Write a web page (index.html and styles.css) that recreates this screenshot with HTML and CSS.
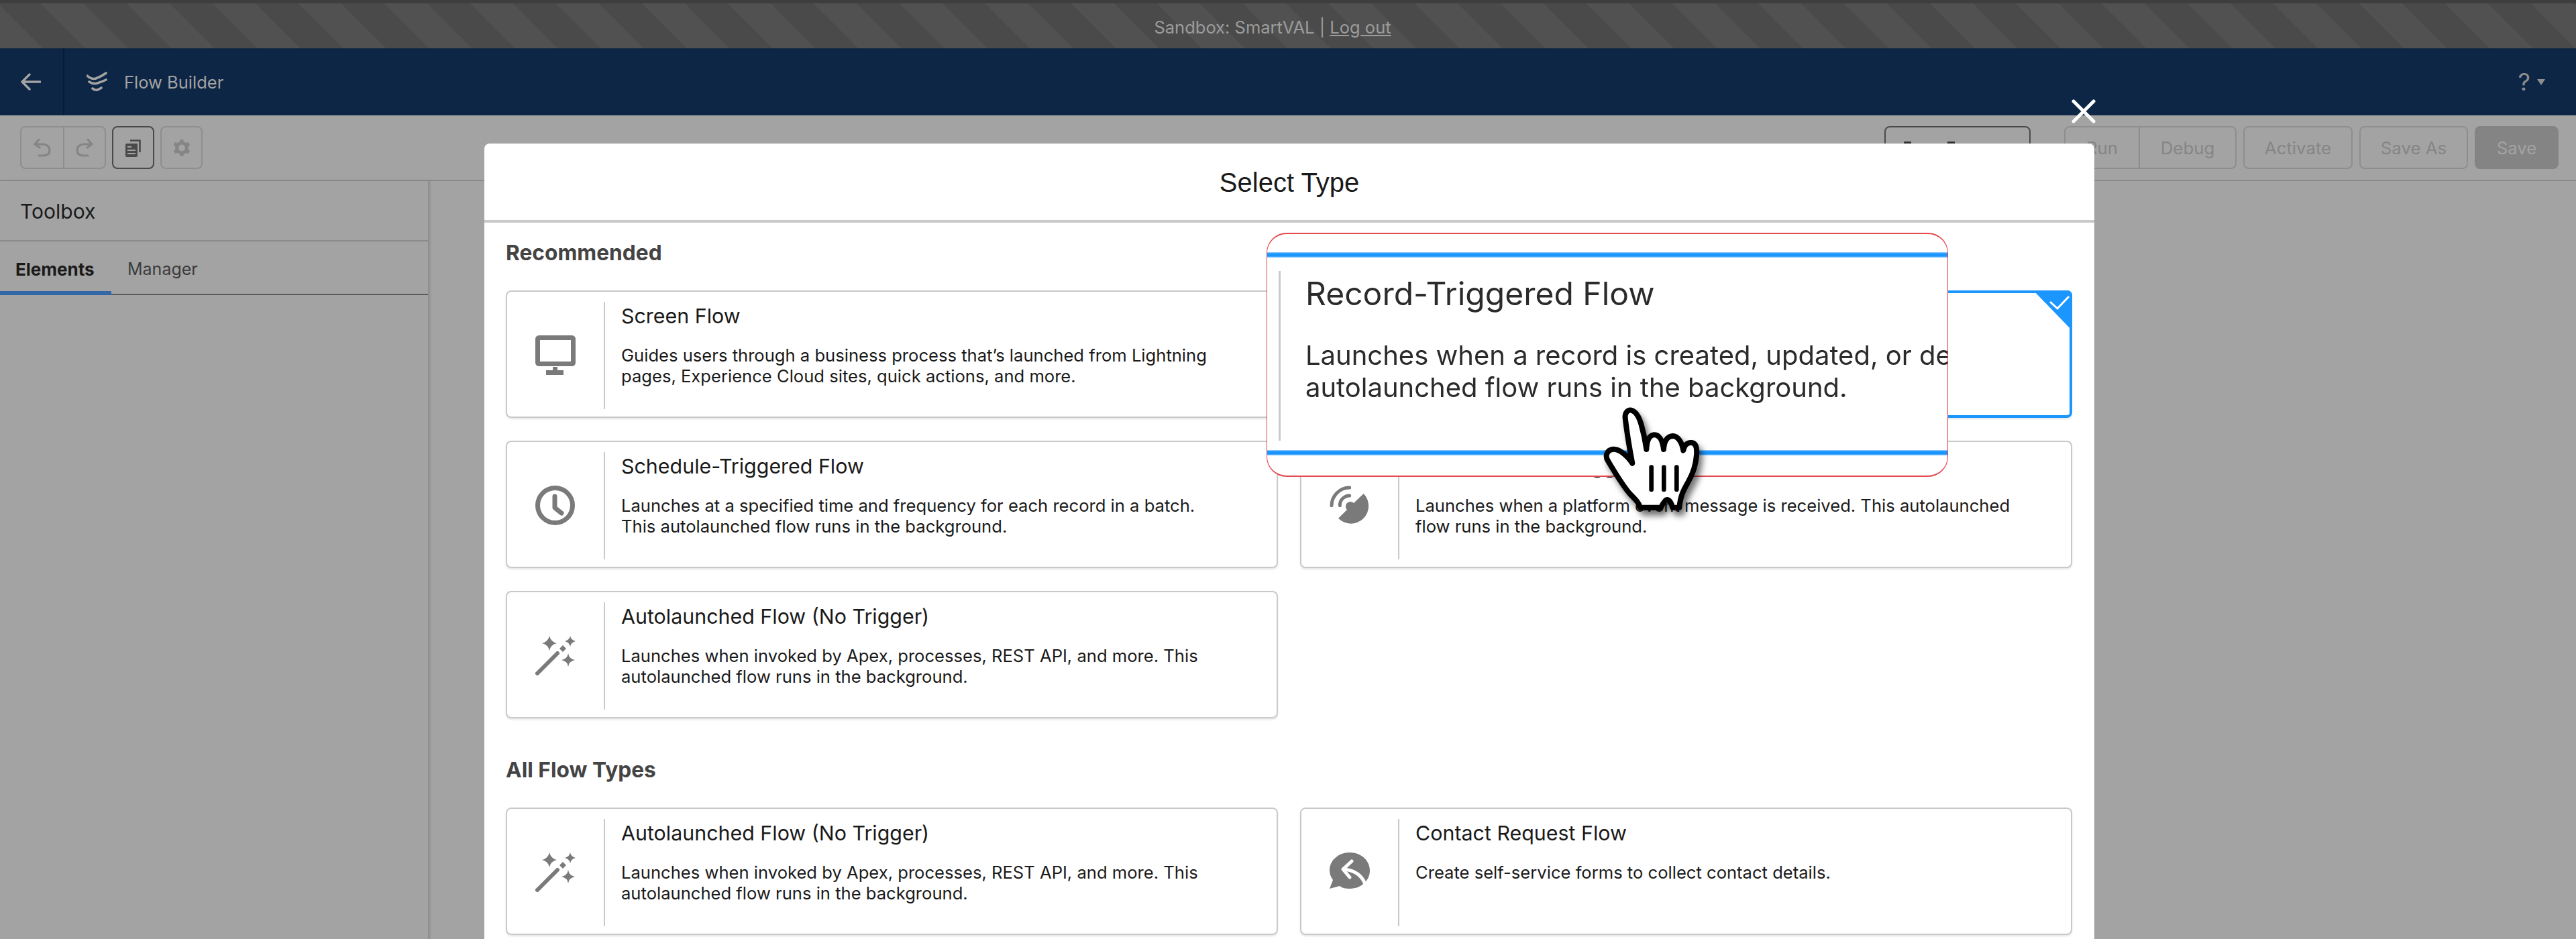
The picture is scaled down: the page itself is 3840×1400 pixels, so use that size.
FILE: index.html
```html
<!DOCTYPE html>
<html lang="en">
<head>
<meta charset="utf-8">
<title>Flow Builder</title>
<link rel="stylesheet" href="styles.css">
</head>
<body>
<svg class="defs" width="0" height="0" aria-hidden="true">
  <symbol id="wand" viewBox="0 0 60 60">
    <path d="M21 0Q23 9 32 11Q23 13 21 22Q19 13 10 11Q19 9 21 0ZM52 0Q53 6 60 8Q53 10 52 16Q51 10 44 8Q51 6 52 0ZM49 26Q50 34 59 36Q50 38 49 46Q48 38 39 36Q48 34 49 26ZM41 14L46 19L41 24L36 19Z" fill="#7a7a7a"/>
    <path d="M3 56L33 26" stroke="#7a7a7a" stroke-width="6" stroke-linecap="round" fill="none"/>
  </symbol>
</svg>

<header class="sandbox">
  <span>Sandbox: SmartVAL | <a class="logout" href="#">Log out</a></span>
</header>

<nav class="nav">
  <div class="nav-back">
    <svg width="30" height="26" viewBox="0 0 30 26"><path d="M29 13H3M13 2L2 13L13 24" fill="none" stroke="#a3a3a3" stroke-width="3.4" stroke-linecap="round" stroke-linejoin="round"/></svg>
  </div>
  <div class="nav-app">
    <svg width="32" height="32" viewBox="0 0 32 32"><path d="M1 7Q8 13 14 11Q22 8 29 3M4 16Q10 20 16 18Q23 16 29 13M9 26Q13 29 16 28Q19 27 22 25" fill="none" stroke="#a3a3a3" stroke-width="3.6" stroke-linecap="round"/></svg>
    <span>Flow Builder</span>
  </div>
  <div class="nav-help"><span class="help-mark">?</span><span class="help-caret"></span></div>
</nav>

<div class="toolbar">
  <div class="tool-left">
    <div class="btn-group">
      <span class="icon-btn">
        <svg width="26" height="27" viewBox="0 0 26 27"><path d="M8 1L2 8L9 13M3 8H14Q24 9 24 17Q24 25 14 25H8" fill="none" stroke="#858585" stroke-width="3.2" stroke-linecap="round" stroke-linejoin="round"/></svg>
      </span>
      <span class="icon-btn">
        <svg width="26" height="27" viewBox="0 0 26 27"><path d="M18 1L24 8L17 13M23 8H12Q2 9 2 17Q2 25 12 25H18" fill="none" stroke="#858585" stroke-width="3.2" stroke-linecap="round" stroke-linejoin="round"/></svg>
      </span>
    </div>
    <span class="icon-btn solo active">
      <svg width="24" height="27" viewBox="0 0 24 27"><path d="M7 2.5H21.5V20" fill="none" stroke="#4a4a4a" stroke-width="2.6"/><path d="M2 7H18V25a2 2 0 0 1-2 2H2a2 2 0 0 1-2-2V9a2 2 0 0 1 2-2Z" fill="#4a4a4a"/><path d="M3 12H9M3 17H15M3 22H15" stroke="#a3a3a3" stroke-width="2"/></svg>
    </span>
    <span class="icon-btn solo">
      <svg width="26" height="27" viewBox="0 0 26 27"><circle cx="13" cy="13.5" r="7.5" fill="none" stroke="#858585" stroke-width="5"/><path d="M13 1V6M13 21V26M2 7L6.500 9.500M19.500 17.500L24 20M2 20L6.500 17.500M19.500 9.500L24 7" stroke="#858585" stroke-width="5"/></svg>
    </span>
  </div>
  <div class="tool-right">
    <span class="text-btn hidden-btn"><i></i><i></i></span>
    <div class="btn-group run-group">
      <span class="text-btn run">Run</span>
      <span class="text-btn debug">Debug</span>
    </div>
    <span class="text-btn activate">Activate</span>
    <span class="text-btn save-as">Save As</span>
    <span class="text-btn save">Save</span>
  </div>
</div>

<div class="workspace">
  <aside class="panel">
    <div class="panel-title">Toolbox</div>
    <div class="tabs">
      <span class="tab tab-on">Elements</span>
      <span class="tab">Manager</span>
    </div>
  </aside>
</div>

<section class="modal">
  <svg class="close" width="36" height="36" viewBox="0 0 36 36"><path d="M3 3L33 33M33 3L3 33" stroke="#fff" stroke-width="5" stroke-linecap="round"/></svg>
  <h1 class="modal-title">Select Type</h1>
  <div class="modal-body">
    <h2 class="group-title">Recommended</h2>
    <div class="card-grid">
      <article class="card">
        <div class="card-icon">
          <svg width="60" height="60" viewBox="0 0 60 60"><rect x="3.500" y="3.500" width="53" height="39" rx="2" fill="none" stroke="#7a7a7a" stroke-width="7"/><path d="M26 47H33V52H42V59H16V52H26Z" fill="#7a7a7a"/></svg>
        </div>
        <div class="card-text">
          <div class="card-title">Screen Flow</div>
          <p class="card-desc">Guides users through a business process that’s launched from Lightning<br>pages, Experience Cloud sites, quick actions, and more.</p>
        </div>
      </article>
      <article class="card card-selected">
        <div class="card-icon"></div>
        <div class="card-text">
          <div class="card-title">Record-Triggered Flow</div>
          <p class="card-desc">Launches when a record is created, updated, or deleted. This<br>autolaunched flow runs in the background.</p>
        </div>
        <svg class="corner" width="60" height="60" viewBox="0 0 60 60"><path d="M2 0H52Q60 0 60 8V60Z" fill="#1b96ff"/><path d="M27 17L38 27L55 9" fill="none" stroke="#fff" stroke-width="3"/></svg>
      </article>
      <article class="card">
        <div class="card-icon">
          <svg width="60" height="60" viewBox="0 0 60 60"><circle cx="29.500" cy="29.500" r="26" fill="none" stroke="#7a7a7a" stroke-width="7"/><path d="M29 16V33L39 41" fill="none" stroke="#7a7a7a" stroke-width="7" stroke-linecap="round" stroke-linejoin="round"/></svg>
        </div>
        <div class="card-text">
          <div class="card-title">Schedule-Triggered Flow</div>
          <p class="card-desc">Launches at a specified time and frequency for each record in a batch.<br>This autolaunched flow runs in the background.</p>
        </div>
      </article>
      <article class="card">
        <div class="card-icon">
          <svg width="60" height="60" viewBox="0 0 60 60"><path d="M50.700 12A26 26 0 0 1 13 48.700L26 36A6.500 6.500 0 1 1 36 26Z" fill="#7a7a7a"/><path d="M3 29.700A27 27 0 0 1 29.700 3M15.300 29.700A14.500 14.500 0 0 1 29.700 15" fill="none" stroke="#7a7a7a" stroke-width="5" stroke-linecap="round"/></svg>
        </div>
        <div class="card-text">
          <div class="card-title">Platform Event–Triggered Flow</div>
          <p class="card-desc">Launches when a platform event message is received. This autolaunched<br>flow runs in the background.</p>
        </div>
      </article>
      <article class="card">
        <div class="card-icon"><svg width="60" height="60"><use href="#wand"/></svg></div>
        <div class="card-text">
          <div class="card-title">Autolaunched Flow (No Trigger)</div>
          <p class="card-desc">Launches when invoked by Apex, processes, REST API, and more. This<br>autolaunched flow runs in the background.</p>
        </div>
      </article>
    </div>

    <h2 class="group-title group-second">All Flow Types</h2>
    <div class="card-grid">
      <article class="card">
        <div class="card-icon"><svg width="60" height="60"><use href="#wand"/></svg></div>
        <div class="card-text">
          <div class="card-title">Autolaunched Flow (No Trigger)</div>
          <p class="card-desc">Launches when invoked by Apex, processes, REST API, and more. This<br>autolaunched flow runs in the background.</p>
        </div>
      </article>
      <article class="card">
        <div class="card-icon">
          <svg width="60" height="60" viewBox="0 0 60 60"><path d="M30 0C47 0 60 12 60 27C60 42 47 54 30 54C24 54 19 53 15 50L0 54L5 41C2 37 0 32 0 27C0 12 13 0 30 0Z" fill="#7a7a7a"/><path d="M33 13L20 25L30 37M21 25Q45 27 53 47" fill="none" stroke="#fff" stroke-width="5" stroke-linecap="round" stroke-linejoin="round"/></svg>
        </div>
        <div class="card-text">
          <div class="card-title">Contact Request Flow</div>
          <p class="card-desc">Create self-service forms to collect contact details.</p>
        </div>
      </article>
    </div>
  </div>
</section>

<div class="magnifier">
  <div class="mag-bar"></div>
  <div class="mag-body">
    <div class="mag-title">Record-Triggered Flow</div>
    <p class="mag-desc">Launches when a record is created, updated, or deleted. This<br>autolaunched flow runs in the background.</p>
  </div>
  <div class="mag-bar"></div>
</div>

<svg class="hand" width="220" height="200" viewBox="0 0 660 600">
  <path d="M250 302C238 240 225 160 218 100C216 75 230 62 245 65C265 70 280 95 290 130C300 165 308 205 313 240C315 200 325 178 345 175C370 173 385 200 390 240C392 205 405 182 430 180C455 180 472 210 478 245C482 222 495 208 515 210C532 212 540 230 537 265C534 310 520 350 500 385C480 420 465 445 460 500H430C425 480 415 465 405 465C395 465 385 485 378 500H285C280 480 265 465 240 440C205 400 170 340 140 290C128 270 135 245 160 240C190 236 225 265 250 302Z" fill="#fff" stroke="#000" stroke-width="24" stroke-linejoin="round"/>
  <path d="M335 320V420M391 320V420M448 320V420" stroke="#000" stroke-width="20" stroke-linecap="round" fill="none"/>
</svg>
</body>
</html>
```

FILE: styles.css
```css
* { box-sizing: border-box; }
html, body { margin: 0; height: 1400px; overflow: hidden; }
body {
  position: relative;
  display: flex;
  flex-direction: column;
  background: #a3a3a3;
  font-family: Inter, "Liberation Sans", sans-serif;
  color: #1a1a1a;
}
.defs { position: absolute; }

/* sandbox strip */
.sandbox {
  height: 72px;
  flex: none;
  display: flex;
  align-items: center;
  justify-content: center;
  padding: 4px 46px 0 0;
  border-top: 5px solid #3e3e3e;
  background: repeating-linear-gradient(45deg, #515151 0 45.250px, #4a4a4a 45.250px 90.500px);
  font-size: 25.500px;
  color: #9c9c9c;
}
.logout { color: inherit; }

/* nav */
.nav {
  height: 100px;
  flex: none;
  display: flex;
  align-items: center;
  background: #0d2645;
  color: #a3a3a3;
}
.nav-back {
  width: 96px;
  height: 100%;
  display: flex;
  align-items: center;
  padding-left: 31px;
  border-right: 2px solid #091b33;
}
.nav-app {
  display: flex;
  align-items: center;
  gap: 24px;
  padding-left: 33px;
  font-size: 25.500px;
}
.nav-help {
  margin-left: auto;
  margin-right: 46px;
  display: flex;
  align-items: center;
  gap: 10px;
  color: #8e8e8e;
}
.help-mark { font-size: 36px; font-weight: 400; }
.help-caret {
  width: 0;
  height: 0;
  border-left: 6px solid transparent;
  border-right: 6px solid transparent;
  border-top: 9px solid #8e8e8e;
}

/* toolbar */
.toolbar {
  height: 98px;
  flex: none;
  display: flex;
  justify-content: space-between;
  padding: 16px 26px 0 30px;
  border-bottom: 2px solid #8a8a8a;
}
.tool-left, .tool-right { display: flex; height: 64px; }
.tool-left { gap: 9px; }
.tool-right { gap: 10px; }
.btn-group {
  display: flex;
  height: 64px;
  border: 2px solid #8e8e8e;
  border-radius: 8px;
}
.icon-btn {
  width: 62px;
  height: 100%;
  display: flex;
  align-items: center;
  justify-content: center;
}
.btn-group .icon-btn + .icon-btn { border-left: 2px solid #8e8e8e; }
.icon-btn.solo {
  width: 63px;
  height: 64px;
  border: 2px solid #8e8e8e;
  border-radius: 8px;
}
.icon-btn.active { border-color: #4a4a4a; }
.text-btn {
  height: 64px;
  display: flex;
  align-items: center;
  justify-content: center;
  border: 2px solid #8e8e8e;
  border-radius: 8px;
  font-size: 25.800px;
  color: #858585;
}
.btn-group .text-btn { height: 100%; border: 0; border-radius: 0; }
.hidden-btn {
  width: 218px;
  margin-right: 40px;
  gap: 54px;
  padding: 21px 84px 0 0;
  border-color: #4a4a4a;
  align-items: flex-start;
}
.hidden-btn i { width: 11px; height: 8px; background: #333; }
.run-group { width: 257px; }
.run { width: 111px; border-right: 2px solid #8e8e8e !important; }
.debug { flex: 1; }
.activate { width: 163px; }
.save-as { width: 162px; }
.save { width: 125px; background: #848484; border-color: #848484; color: #a3a3a3; }

/* left panel */
.workspace { flex: 1; min-height: 0; display: flex; }
.panel {
  width: 640px;
  border-right: 2px solid #8e8e8e;
  box-shadow: 2px 0 3px rgba(0, 0, 0, .08);
}
.panel-title {
  height: 90px;
  display: flex;
  align-items: center;
  padding: 2px 0 0 30px;
  border-bottom: 2px solid #8a8a8a;
  font-size: 30px;
}
.tabs {
  height: 80px;
  display: flex;
  border-bottom: 2px solid #5a5a5a;
  font-size: 25px;
  color: #3c3c3c;
}
.tab {
  display: flex;
  align-items: center;
  padding: 4px 23px 0;
}
.tab-on {
  width: 166px;
  height: 80px;
  padding-top: 8px;
  font-size: 26px;
  font-weight: 700;
  color: #1a1a1a;
  border-bottom: 6px solid #3368a8;
}
.tab + .tab { padding-left: 24px; }

/* modal */
.modal {
  position: absolute;
  top: 214px;
  left: 722px;
  width: 2400px;
  height: 1186px;
  background: #fff;
  border-radius: 8px 8px 0 0;
}
.close { position: absolute; top: -66px; right: -2px; }
.modal-title {
  height: 118px;
  margin: 0;
  padding-top: 2px;
  display: flex;
  align-items: center;
  justify-content: center;
  border-bottom: 4px solid #c9c9c9;
  font: 400 40px "Liberation Sans", Arial, sans-serif;
  color: #1a1a1a;
}
.modal-body { padding: 26px 32px 0; }
.group-title {
  margin: 0 0 37px;
  font-size: 31.700px;
  line-height: 38px;
  font-weight: 700;
  color: #444;
}
.group-second { margin-top: 58px; }
.card-grid {
  display: grid;
  grid-template-columns: 1151px 1151px;
  grid-auto-rows: 190px;
  gap: 34px 33px;
}
.card {
  position: relative;
  display: flex;
  padding: 15px 0 11px;
  border: 2px solid #c9c9c9;
  border-radius: 8px;
  box-shadow: 0 2px 3px rgba(0, 0, 0, .1);
}
.card-icon {
  width: 146px;
  flex: none;
  display: flex;
  align-items: center;
  justify-content: center;
  border-right: 2px solid #c9c9c9;
}
.card-text { padding-left: 24px; }
.card-title { font-size: 30.400px; line-height: 42px; }
.card-desc { margin: 22px 0 0; font-size: 25.600px; line-height: 31px; }
.card-selected { border: 4px solid #1b96ff; }
.corner { position: absolute; top: -4px; right: -4px; }

/* magnifier */
.magnifier {
  position: absolute;
  top: 347px;
  left: 1888px;
  width: 1016px;
  height: 364px;
  display: flex;
  flex-direction: column;
  padding-top: 27px;
  border: solid #e5484d;
  border-width: 2px 1px;
  border-radius: 30px;
  background: #fff;
  overflow: hidden;
}
.mag-bar {
  height: 8px;
  flex: none;
  background: linear-gradient(#a6d5ff 0, #1b96ff 25%, #1b96ff 75%, #a6d5ff 100%);
}
.mag-body {
  height: 287px;
  margin-left: 17px;
  padding: 19px 0 0 40px;
  color: #2b2b2b;
  filter: blur(.5px);
  white-space: nowrap;
  position: relative;
}
.mag-body::before {
  content: "";
  position: absolute;
  left: 0;
  top: 20px;
  bottom: 14px;
  width: 3px;
  background: #c9c9c9;
}
.mag-title { font-size: 48px; line-height: 70px; }
.mag-desc { margin: 33px 0 0; font-size: 40px; line-height: 48px; }

/* pointer */
.hand {
  position: absolute;
  top: 590px;
  left: 2350px;
  filter: drop-shadow(5px 8px 5px rgba(0, 0, 0, .55));
}
```
